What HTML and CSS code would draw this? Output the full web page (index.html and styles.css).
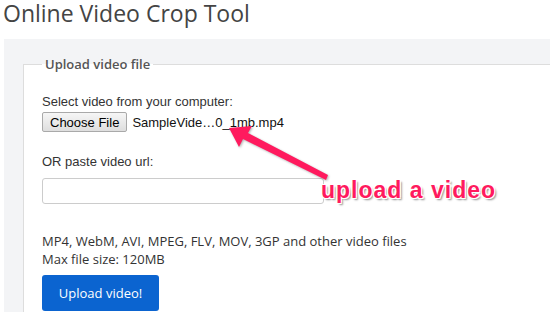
FILE: index.html
```html
<!DOCTYPE html>
<html>
  <head>
    <meta charset="utf-8" />
    <title>Online Video Crop Tool</title>
    <meta name="viewport" content="width=device-width, initial-scale=1" />
    <link rel="stylesheet" href="styles.css">
  </head>
  <body>
    <h1 class="title">Online Video Crop Tool</h1>
    <div class="panel">
      <fieldset class="upload">
        <legend>Upload video file</legend>
        <div class="field">
          <label class="label">Select video from your computer:</label>
          <div class="file">
            <button class="choose" type="button">Choose File</button>
            <span class="filename">SampleVide…0_1mb.mp4</span>
          </div>
        </div>
        <div class="field url">
          <label class="label">OR paste video url:</label>
          <input class="url-input" type="text" name="url" />
        </div>
        <div class="info">
          <p>MP4, WebM, AVI, MPEG, FLV, MOV, 3GP and other video files</p>
          <p>Max file size: 120MB</p>
        </div>
        <button class="submit" type="button">Upload video!</button>
      </fieldset>
    </div>

    <!-- annotation drawn over the page -->
    <svg class="arrow" width="550" height="312" viewBox="0 0 550 312">
      <polygon points="229,128 252,126 248,133 328,175 326,180 243,139 239,147" fill="#ff1a5e" />
    </svg>
    <div class="note">upload a video</div>
  </body>
</html>
```
FILE: styles.css
```css
body {
  margin: 0;
  padding: 0;
  width: 550px;
  height: 312px;
  overflow: hidden;
  background: #fff;
  font-family: "Open Sans", Arial, sans-serif;
  color: #333;
}
.title {
  margin: 0;
  padding: 1px 0 0 3px;
  font-size: 23px;
  font-weight: 400;
  line-height: 25px;
  color: #444;
}
.panel {
  box-sizing: border-box;
  margin: 13px 0 0 4px;
  padding: 16px 0 0 19px;
  background: #f3f4f6;
  height: 273px;
  overflow: hidden;
}
.upload {
  box-sizing: border-box;
  margin: 0;
  padding: 0 18px;
  border: 1px solid #ddd;
  border-right: none;
  border-bottom: none;
  background: #fff;
  height: 100%;
}
.upload legend {
  padding: 0 3px;
  font-size: 13px;
  font-weight: 600;
  line-height: 18px;
  color: #555;
}
.field {
  display: flex;
  flex-direction: column;
  align-items: flex-start;
}
.label {
  font-family: "Liberation Sans", Arial, sans-serif;
  font-size: 13px;
  line-height: 16px;
  color: #333;
  margin-top: 21px;
}
.file {
  display: flex;
  align-items: center;
  gap: 5px;
  margin-top: 2px;
  font-family: "Liberation Sans", Arial, sans-serif;
  font-size: 13px;
}
.choose {
  height: 20px;
  padding: 0 7px;
  font-family: "Liberation Sans", Arial, sans-serif;
  font-size: 13px;
  color: #000;
  background: linear-gradient(#f6f6f6, #dedede);
  border: 1px solid #a9a9a9;
  border-radius: 2px;
}
.filename {
  color: #111;
}
.url .label {
  margin-top: 22px;
}
.url-input {
  margin-top: 8px;
  width: 282px;
  height: 26px;
  box-sizing: border-box;
  border: 1px solid #ccc;
  border-radius: 3px;
}
.info {
  margin-top: 28px;
  font-size: 13px;
  line-height: 18px;
  color: #333;
}
.info p {
  margin: 0;
}
.submit {
  margin-top: 7px;
  width: 117px;
  height: 36px;
  border: none;
  border-radius: 3px;
  background: #0b64d0;
  color: #fff;
  font-family: "Open Sans", Arial, sans-serif;
  font-size: 13px;
}
.arrow {
  position: absolute;
  left: 0;
  top: 0;
  filter: drop-shadow(1px 1px 1px rgba(0, 0, 0, 0.3));
}
.note {
  position: absolute;
  left: 321px;
  top: 177px;
  font-family: "Liberation Sans", Arial, sans-serif;
  font-weight: 700;
  font-size: 23px;
  letter-spacing: 1px;
  line-height: 26px;
  color: #ff1a5e;
  text-shadow: -1px -1px 0 #fff, 1px -1px 0 #fff, -1px 1px 0 #fff, 1px 1px 0 #fff, 2px 2px 2px rgba(0, 0, 0, 0.45);
}
```
